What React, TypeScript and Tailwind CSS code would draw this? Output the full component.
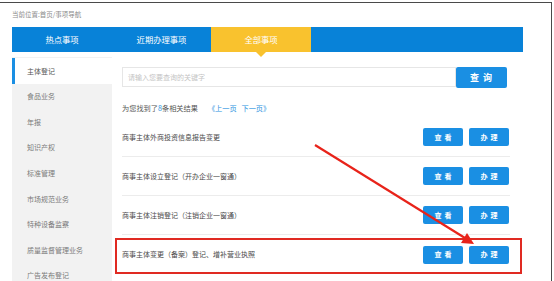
import React from "react";

const font = { fontFamily: '"Noto Sans CJK SC", "Noto Sans", sans-serif' };

const sideItems = [
  "主体登记",
  "食品业务",
  "年报",
  "知识产权",
  "标准管理",
  "市场规范业务",
  "特种设备监察",
  "质量监督管理业务",
  "广告发布登记",
];

const rows = [
  "商事主体外商投资信息报告变更",
  "商事主体设立登记（开办企业一窗通）",
  "商事主体注销登记（注销企业一窗通）",
  "商事主体变更（备案）登记、增补营业执照",
];

export default function App() {
  return (
    <div className="relative w-[554px] h-[281px] overflow-hidden bg-white pt-[2px]" style={font}>
      <div className="w-[552px] h-[279px] border-t border-r border-[#4a4a4a]">
        <div className="pl-[12px] pt-[6px] h-[16px] text-[6.5px] leading-[10px] text-[#8a8a8a]">
          当前位置:首页/事项导航
        </div>
        <div className="ml-[12px] mt-[8px] w-[511px] h-[25px] bg-[#0882d8] flex text-white text-[8.3px]">
          <div className="w-[100px] flex items-center justify-center">热点事项</div>
          <div className="w-[99px] flex items-center justify-center">近期办理事项</div>
          <div className="relative w-[100px] bg-[#f9c22e] flex items-center justify-center">
            全部事项
            <div className="absolute left-1/2 -translate-x-1/2 bottom-[-5px] w-0 h-0 border-l-[5px] border-r-[5px] border-t-[5px] border-l-transparent border-r-transparent border-t-[#f9c22e]" />
          </div>
        </div>
        <div className="ml-[12px] mt-[5px] flex">
          <div className="w-[100px] h-[230px] bg-[#f2f2f2] pt-px">
            {sideItems.map((s, i) => (
              <div
                key={s}
                className={
                  i === 0
                    ? "h-[25.6px] flex items-center pl-[12px] bg-white border-l-[3px] border-[#1a8fe3] text-[7px] text-[#555]"
                    : "h-[25.6px] flex items-center pl-[15px] text-[7px] text-[#7a7a7a]"
                }
              >
                {s}
              </div>
            ))}
          </div>
          <div className="w-[411px] pl-[10px] pr-[13px] pt-[10px]">
            <div className="flex items-start">
              <div className="w-[334px] h-[20px] border border-[#e6e6e6] flex items-center pl-[5px] text-[7px] text-[#c4c4c4]">
                请输入您要查询的关键字
              </div>
              <div className="w-[51px] h-[21px] bg-[#1a8fe3] rounded-[2px] flex items-center justify-center text-white text-[9px] font-bold tracking-[1px]">
                查 询
              </div>
            </div>
            <div className="mt-[14px] h-[12px] flex items-center text-[7.2px] text-[#555]">
              <span>
                为您找到了<span className="text-[#2b91e0]">8</span>条相关结果
              </span>
              <span className="ml-[10px] text-[#2b91e0]">《上一页&nbsp;&nbsp;&nbsp;下一页》</span>
            </div>
            <div className="mt-[4px]">
              {rows.map((r, i) => (
                <div
                  key={r}
                  className={
                    "h-[39px] flex items-center justify-between " +
                    (i < rows.length - 1 ? "border-b border-[#ececec]" : "")
                  }
                >
                  <span className="text-[7px] text-[#4a4a4a]">{r}</span>
                  <div className="flex gap-[6px] pr-px">
                    <div className="w-[40px] h-[18px] bg-[#1a8fe3] rounded-[2px] flex items-center justify-center text-white text-[7px] font-bold tracking-[3px] pl-[3px]">
                      查看
                    </div>
                    <div className="w-[40px] h-[18px] bg-[#1a8fe3] rounded-[2px] flex items-center justify-center text-white text-[7px] font-bold tracking-[3px] pl-[3px]">
                      办理
                    </div>
                  </div>
                </div>
              ))}
            </div>
          </div>
        </div>
      </div>
      <div className="absolute left-[115px] top-[238px] w-[407px] h-[36px] border-2 border-[#e02a22]" />
      <svg className="absolute left-0 top-0" width="554" height="281" viewBox="0 0 554 281">
        <line x1="315" y1="145" x2="465" y2="238" stroke="#e8231a" strokeWidth="2.2" />
        <polygon points="474,244 461,243 467,233" fill="#e8231a" />
      </svg>
    </div>
  );
}
